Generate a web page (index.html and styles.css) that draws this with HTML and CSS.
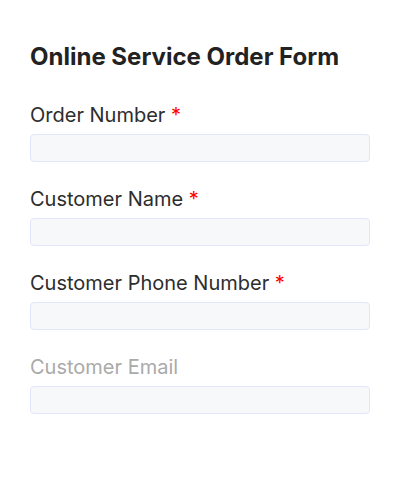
FILE: index.html
```html
<!DOCTYPE html>
<html>
<head>
<meta charset="utf-8">
<link rel="stylesheet" href="styles.css">
</head>
<body>
<form class="form">
  <h1 class="title">Online Service Order Form</h1>
  <div class="field">
    <label class="label">Order Number <span class="req">*</span></label>
    <input class="input" type="text">
  </div>
  <div class="field">
    <label class="label">Customer Name <span class="req">*</span></label>
    <input class="input" type="text">
  </div>
  <div class="field">
    <label class="label">Customer Phone Number <span class="req">*</span></label>
    <input class="input" type="text">
  </div>
  <div class="field">
    <label class="label muted">Customer Email</label>
    <input class="input" type="text">
  </div>
</form>
</body>
</html>
```
FILE: styles.css
```css
html, body {
  margin: 0;
  padding: 0;
  background: #fff;
}
body {
  font-family: Inter, "Noto Sans", sans-serif;
  color: #222;
}
.form {
  padding: 40px 30px 0 30px;
  display: flex;
  flex-direction: column;
}
.title {
  margin: 0 0 29px 0;
  font-size: 24px;
  font-weight: 700;
  line-height: 34px;
  color: #222;
}
.field {
  display: flex;
  flex-direction: column;
  gap: 7px;
  margin-bottom: 25px;
}
.label {
  font-size: 20px;
  line-height: 24px;
  color: #2d2d2d;
}
.label.muted {
  color: #aaaaaa;
}
.req {
  color: #f00;
}
.input {
  box-sizing: border-box;
  height: 28px;
  width: 100%;
  margin: 0;
  border: 1px solid #e1e6fb;
  border-radius: 4px;
  background: #f7f8fa;
}
```
